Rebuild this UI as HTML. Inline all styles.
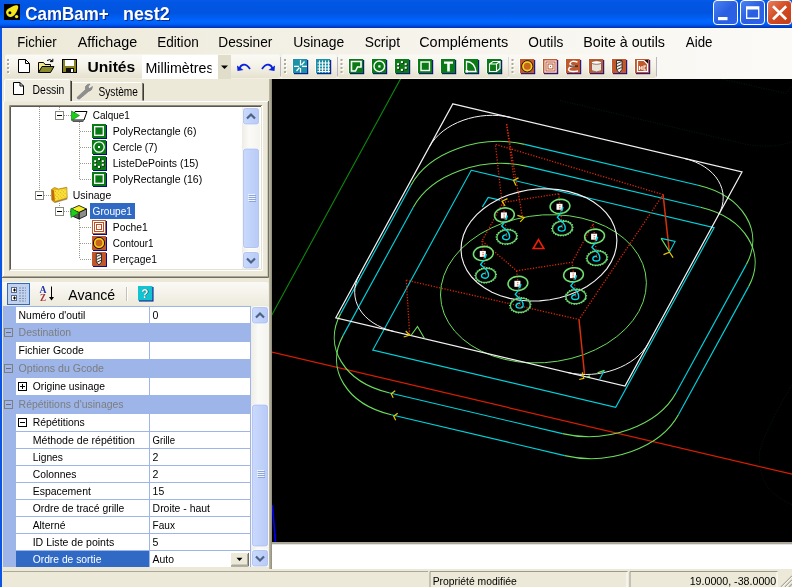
<!DOCTYPE html>
<html><head><meta charset="utf-8"><title>CamBam+ nest2</title>
<style>
html,body{margin:0;padding:0;background:#ECE9D8;overflow:hidden}
svg{display:block;will-change:transform;font-family:"Liberation Sans", sans-serif}
text{white-space:pre}
</style></head><body>
<svg width="792" height="587" viewBox="0 0 792 587">
<defs>
<linearGradient id="gTitle" x1="0" y1="0" x2="0" y2="1">
 <stop offset="0" stop-color="#0459E8"/><stop offset="0.1" stop-color="#0156E3"/>
 <stop offset="0.45" stop-color="#0054E0"/><stop offset="0.6" stop-color="#005CEF"/>
 <stop offset="0.76" stop-color="#0066FE"/><stop offset="0.86" stop-color="#0060F6"/>
 <stop offset="0.93" stop-color="#0046D6"/><stop offset="1" stop-color="#0030B4"/>
</linearGradient>
<linearGradient id="gMenu" x1="0" y1="0" x2="1" y2="0">
 <stop offset="0" stop-color="#ECE9D8"/><stop offset="0.55" stop-color="#F6F4EC"/><stop offset="1" stop-color="#FBFAF7"/>
</linearGradient>
<linearGradient id="gTool" x1="0" y1="0" x2="0" y2="1">
 <stop offset="0" stop-color="#FBFAF6"/><stop offset="0.5" stop-color="#F4F2E8"/><stop offset="1" stop-color="#E6E2CF"/>
</linearGradient>
<linearGradient id="gBtnB" x1="0" y1="0" x2="1" y2="1">
 <stop offset="0" stop-color="#4C84F2"/><stop offset="0.5" stop-color="#2A5FE2"/><stop offset="1" stop-color="#2C62E8"/>
</linearGradient>
<linearGradient id="gBtnR" x1="0" y1="0" x2="1" y2="1">
 <stop offset="0" stop-color="#E8825E"/><stop offset="0.5" stop-color="#D24A22"/><stop offset="1" stop-color="#C43C18"/>
</linearGradient>
<linearGradient id="gSbBtn" x1="0" y1="0" x2="1" y2="0">
 <stop offset="0" stop-color="#CBDAFD"/><stop offset="1" stop-color="#B7CAF6"/>
</linearGradient>
<linearGradient id="gSbTrack" x1="0" y1="0" x2="1" y2="0">
 <stop offset="0" stop-color="#EEEDE5"/><stop offset="0.4" stop-color="#FAFAF7"/><stop offset="1" stop-color="#F4F3EE"/>
</linearGradient>
<linearGradient id="gPgTool" x1="0" y1="0" x2="0" y2="1">
 <stop offset="0" stop-color="#FAF9F5"/><stop offset="1" stop-color="#EDEBDD"/>
</linearGradient>
<clipPath id="clipCombo"><rect x="142" y="55" width="69.5" height="24"/></clipPath>
<clipPath id="clipCanvas"><rect x="272" y="79" width="520" height="463"/></clipPath>
</defs>
<rect x="0" y="0" width="792" height="587" fill="#ECE9D8"/>
<rect x="0" y="0" width="792" height="28" fill="url(#gTitle)"/>
<rect x="4" y="4" width="16" height="16" fill="#000"/>
<path d="M6.2 13.2 C5.6 10.5 8 8.8 10.5 7.6 C12.5 6.4 15.5 4.6 17.6 5.6 C19 6.6 17.8 9.6 16.8 11.6 C15.6 14 13.8 16.6 11 17 C8.8 17.4 6.8 15.8 6.2 13.2 Z" fill="#F4E61E"/>
<circle cx="9.9" cy="12.8" r="1.5" fill="#000"/>
<circle cx="16.6" cy="16.6" r="1.7" fill="#F4E61E"/>
<text x="26.3" y="20.7" font-size="19" fill="#0A2A8A" font-weight="bold" textLength="83.3" lengthAdjust="spacingAndGlyphs">CamBam+</text>
<text x="124.0" y="20.7" font-size="19" fill="#0A2A8A" font-weight="bold" textLength="46.7" lengthAdjust="spacingAndGlyphs">nest2</text>
<text x="25.3" y="19.8" font-size="19" fill="#fff" font-weight="bold" textLength="83.3" lengthAdjust="spacingAndGlyphs">CamBam+</text>
<text x="123.0" y="19.8" font-size="19" fill="#fff" font-weight="bold" textLength="46.7" lengthAdjust="spacingAndGlyphs">nest2</text>
<rect x="713.5" y="0.5" width="24" height="24" rx="3.5" fill="url(#gBtnB)" stroke="#fff" stroke-width="1"/>
<rect x="740.5" y="0.5" width="24" height="24" rx="3.5" fill="url(#gBtnB)" stroke="#fff" stroke-width="1"/>
<rect x="767.5" y="0.5" width="24" height="24" rx="3.5" fill="url(#gBtnR)" stroke="#fff" stroke-width="1"/>
<rect x="718" y="17" width="9.5" height="3.2" fill="#fff"/>
<path d="M746 6.3h13.4v12.6h-13.4z M747.3 9.4v8.2h10.8v-8.2z" fill="#fff" fill-rule="evenodd"/>
<path d="M773 6.2 L786.2 19.2 M786.2 6.2 L773 19.2" stroke="#fff" stroke-width="2.6" stroke-linecap="butt" fill="none"/>
<rect x="2" y="28" width="790" height="26" fill="url(#gMenu)"/>
<text x="17.3" y="46.7" font-size="15" fill="#000" font-weight="normal" textLength="39.4" lengthAdjust="spacingAndGlyphs">Fichier</text>
<text x="77.7" y="46.7" font-size="15" fill="#000" font-weight="normal" textLength="59.6" lengthAdjust="spacingAndGlyphs">Affichage</text>
<text x="157.3" y="46.7" font-size="15" fill="#000" font-weight="normal" textLength="41.4" lengthAdjust="spacingAndGlyphs">Edition</text>
<text x="218.3" y="46.7" font-size="15" fill="#000" font-weight="normal" textLength="54.0" lengthAdjust="spacingAndGlyphs">Dessiner</text>
<text x="293.3" y="46.7" font-size="15" fill="#000" font-weight="normal" textLength="51.0" lengthAdjust="spacingAndGlyphs">Usinage</text>
<text x="364.7" y="46.7" font-size="15" fill="#000" font-weight="normal" textLength="35.3" lengthAdjust="spacingAndGlyphs">Script</text>
<text x="419.2" y="46.7" font-size="15" fill="#000" font-weight="normal" textLength="89.1" lengthAdjust="spacingAndGlyphs">Compléments</text>
<text x="528.3" y="46.7" font-size="15" fill="#000" font-weight="normal" textLength="35.0" lengthAdjust="spacingAndGlyphs">Outils</text>
<text x="583.3" y="46.7" font-size="15" fill="#000" font-weight="normal" textLength="81.7" lengthAdjust="spacingAndGlyphs">Boite à outils</text>
<text x="685.8" y="46.7" font-size="15" fill="#000" font-weight="normal" textLength="26.7" lengthAdjust="spacingAndGlyphs">Aide</text>
<rect x="2" y="54" width="790" height="25" fill="url(#gMenu)"/>
<path d="M7 54.5 H278 Q280 54.5 280 56.5 V76 Q280 78 278 78 H7 Q5 78 5 76 V56.5 Q5 54.5 7 54.5 Z" fill="url(#gTool)"/>
<path d="M280.5 57 V76.5" stroke="#B9B6C3" stroke-width="1" fill="none"/>
<rect x="8" y="60" width="2" height="2" fill="#fff"/>
<rect x="7" y="59" width="2" height="2" fill="#ADAA9A"/>
<rect x="8" y="64" width="2" height="2" fill="#fff"/>
<rect x="7" y="63" width="2" height="2" fill="#ADAA9A"/>
<rect x="8" y="68" width="2" height="2" fill="#fff"/>
<rect x="7" y="67" width="2" height="2" fill="#ADAA9A"/>
<rect x="8" y="72" width="2" height="2" fill="#fff"/>
<rect x="7" y="71" width="2" height="2" fill="#ADAA9A"/>
<path d="M283.5 54.5 H335 Q337 54.5 337 56.5 V76 Q337 78 335 78 H283.5 Q281.5 78 281.5 76 V56.5 Q281.5 54.5 283.5 54.5 Z" fill="url(#gTool)"/>
<path d="M337.5 57 V76.5" stroke="#B9B6C3" stroke-width="1" fill="none"/>
<rect x="285" y="60" width="2" height="2" fill="#fff"/>
<rect x="284" y="59" width="2" height="2" fill="#ADAA9A"/>
<rect x="285" y="64" width="2" height="2" fill="#fff"/>
<rect x="284" y="63" width="2" height="2" fill="#ADAA9A"/>
<rect x="285" y="68" width="2" height="2" fill="#fff"/>
<rect x="284" y="67" width="2" height="2" fill="#ADAA9A"/>
<rect x="285" y="72" width="2" height="2" fill="#fff"/>
<rect x="284" y="71" width="2" height="2" fill="#ADAA9A"/>
<path d="M340 54.5 H506.5 Q508.5 54.5 508.5 56.5 V76 Q508.5 78 506.5 78 H340 Q338 78 338 76 V56.5 Q338 54.5 340 54.5 Z" fill="url(#gTool)"/>
<path d="M509.0 57 V76.5" stroke="#B9B6C3" stroke-width="1" fill="none"/>
<rect x="341.5" y="60" width="2" height="2" fill="#fff"/>
<rect x="340.5" y="59" width="2" height="2" fill="#ADAA9A"/>
<rect x="341.5" y="64" width="2" height="2" fill="#fff"/>
<rect x="340.5" y="63" width="2" height="2" fill="#ADAA9A"/>
<rect x="341.5" y="68" width="2" height="2" fill="#fff"/>
<rect x="340.5" y="67" width="2" height="2" fill="#ADAA9A"/>
<rect x="341.5" y="72" width="2" height="2" fill="#fff"/>
<rect x="340.5" y="71" width="2" height="2" fill="#ADAA9A"/>
<path d="M511 54.5 H654 Q656 54.5 656 56.5 V76 Q656 78 654 78 H511 Q509 78 509 76 V56.5 Q509 54.5 511 54.5 Z" fill="url(#gTool)"/>
<path d="M656.5 57 V76.5" stroke="#B9B6C3" stroke-width="1" fill="none"/>
<rect x="512.5" y="60" width="2" height="2" fill="#fff"/>
<rect x="511.5" y="59" width="2" height="2" fill="#ADAA9A"/>
<rect x="512.5" y="64" width="2" height="2" fill="#fff"/>
<rect x="511.5" y="63" width="2" height="2" fill="#ADAA9A"/>
<rect x="512.5" y="68" width="2" height="2" fill="#fff"/>
<rect x="511.5" y="67" width="2" height="2" fill="#ADAA9A"/>
<rect x="512.5" y="72" width="2" height="2" fill="#fff"/>
<rect x="511.5" y="71" width="2" height="2" fill="#ADAA9A"/>
<path d="M18.5 59.5 H25.5 L29.5 63.5 V72.5 H18.5 Z" fill="#fff" stroke="#000" stroke-width="1"/>
<path d="M25.5 59.5 V63.5 H29.5" fill="none" stroke="#000" stroke-width="1"/>
<path d="M38.5 72.5 V62.5 H43.5 L45 64.5 H50.5 V66.5" fill="#F3E98A" stroke="#000" stroke-width="1"/>
<path d="M38.5 72.5 L42 66.5 H54 L50.5 72.5 Z" fill="#8A8A2A" stroke="#000" stroke-width="1"/>
<path d="M47 60.5 Q50 58.5 52.5 61 M52.8 58.8 V61.6 H50" fill="none" stroke="#000" stroke-width="1"/>
<rect x="62.5" y="59.5" width="14" height="13" fill="#8A8220" stroke="#000" stroke-width="1"/>
<rect x="65" y="60" width="9" height="6" fill="#fff"/>
<rect x="66" y="68" width="8" height="5" fill="#111"/>
<rect x="71" y="69" width="2" height="3" fill="#fff"/>
<text x="87.5" y="71.6" font-size="15" fill="#000" font-weight="bold" textLength="47.7" lengthAdjust="spacingAndGlyphs">Unités</text>
<rect x="142" y="55" width="76" height="24" fill="#fff"/>
<text x="145.5" y="72.5" font-size="15" fill="#000" font-weight="normal" textLength="68.0" lengthAdjust="spacingAndGlyphs" clip-path="url(#clipCombo)">Millimètres</text>
<rect x="218" y="55" width="13" height="24" fill="#E0DDCB"/>
<path d="M221 65.5 h7 l-3.5 3.6 z" fill="#000"/>
<path d="M239.5 69.5 C240 64.5 245.5 62 250 69" fill="none" stroke="#0A22E0" stroke-width="1.8"/>
<path d="M237 65.5 L237.5 71 L243.5 70 Z" fill="#0A22E0"/>
<path d="M262 69 C266.5 62 272 64.5 272.5 69.5" fill="none" stroke="#0A22E0" stroke-width="1.8"/>
<path d="M275 65.5 L274.5 71 L268.5 70 Z" fill="#0A22E0"/>
<g transform="translate(0,-0.5)">
<rect x="292" y="58.5" width="15" height="15" fill="#FFFFFF"/>
<rect x="294" y="60.5" width="14.2" height="14.2" fill="#0A0A8C"/>
<rect x="293" y="59.5" width="14.2" height="14.2" fill="#1C92A8"/>
<path d="M300.5 60.5 V66 M300.5 68.5 V73 M294 66.8 H299 M302 66.8 H307 M304.5 62 L301.5 65.5 M296.5 71.5 L299.5 68" stroke="#fff" stroke-width="1.2" fill="none"/>
<rect x="315" y="58.5" width="15" height="15" fill="#FFFFFF"/>
<rect x="317" y="60.5" width="14.2" height="14.2" fill="#0A0A8C"/>
<rect x="316" y="59.5" width="14.2" height="14.2" fill="#1C92A8"/>
<path d="M319.5 61 V73 M322.5 61 V73 M325.5 61 V73 M328.5 61 V73 M317.5 63.5 H330 M317.5 66.5 H330 M317.5 69.5 H330 M317.5 72 H330" stroke="#fff" stroke-width="1" fill="none"/>
<rect x="348" y="58.5" width="15" height="15" fill="#FFFFFF"/>
<rect x="350" y="60.5" width="14.2" height="14.2" fill="#0A0A8C"/>
<rect x="349" y="59.5" width="14.2" height="14.2" fill="#0A7A14"/>
<path d="M351.5 62 H361 V67.5 H357.5 L355.5 71.5 H351.5 Z" fill="none" stroke="#fff" stroke-width="1.6"/>
<rect x="371" y="58.5" width="15" height="15" fill="#FFFFFF"/>
<rect x="373" y="60.5" width="14.2" height="14.2" fill="#0A0A8C"/>
<rect x="372" y="59.5" width="14.2" height="14.2" fill="#0A7A14"/>
<ellipse cx="379.3" cy="66.8" rx="5.3" ry="5.3" fill="none" stroke="#fff" stroke-width="1.4"/><rect x="378.3" y="65.8" width="2.2" height="2.2" fill="#fff"/>
<rect x="394" y="58.5" width="15" height="15" fill="#FFFFFF"/>
<rect x="396" y="60.5" width="14.2" height="14.2" fill="#0A0A8C"/>
<rect x="395" y="59.5" width="14.2" height="14.2" fill="#0A7A14"/>
<rect x="401.4" y="62.1" width="2.2" height="2.2" fill="#111"/>
<rect x="400.9" y="61.6" width="2" height="2" fill="#fff"/>
<rect x="397.59999999999997" y="64.2" width="2.2" height="2.2" fill="#111"/>
<rect x="397.09999999999997" y="63.7" width="2" height="2" fill="#fff"/>
<rect x="405.2" y="64.2" width="2.2" height="2.2" fill="#111"/>
<rect x="404.7" y="63.7" width="2" height="2" fill="#fff"/>
<rect x="397.59999999999997" y="67.8" width="2.2" height="2.2" fill="#111"/>
<rect x="397.09999999999997" y="67.3" width="2" height="2" fill="#fff"/>
<rect x="405.2" y="67.8" width="2.2" height="2.2" fill="#111"/>
<rect x="404.7" y="67.3" width="2" height="2" fill="#fff"/>
<rect x="401.4" y="69.9" width="2.2" height="2.2" fill="#111"/>
<rect x="400.9" y="69.4" width="2" height="2" fill="#fff"/>
<rect x="417" y="58.5" width="15" height="15" fill="#FFFFFF"/>
<rect x="419" y="60.5" width="14.2" height="14.2" fill="#0A0A8C"/>
<rect x="418" y="59.5" width="14.2" height="14.2" fill="#0A7A14"/>
<rect x="421" y="62.5" width="8.5" height="8.5" fill="none" stroke="#fff" stroke-width="1.4"/>
<rect x="440" y="58.5" width="15" height="15" fill="#FFFFFF"/>
<rect x="442" y="60.5" width="14.2" height="14.2" fill="#0A0A8C"/>
<rect x="441" y="59.5" width="14.2" height="14.2" fill="#0A7A14"/>
<path d="M444 62 H453 V64.2 H449.8 V72 H447.2 V64.2 H444 Z" fill="#fff"/>
<rect x="463" y="58.5" width="15" height="15" fill="#FFFFFF"/>
<rect x="465" y="60.5" width="14.2" height="14.2" fill="#0A0A8C"/>
<rect x="464" y="59.5" width="14.2" height="14.2" fill="#0A7A14"/>
<path d="M466.5 72 V62 Q474.5 62.5 476 72 Z" fill="none" stroke="#fff" stroke-width="1.3"/><rect x="465.5" y="70.5" width="2.5" height="2.5" fill="#fff"/>
<rect x="486" y="58.5" width="15" height="15" fill="#FFFFFF"/>
<rect x="488" y="60.5" width="14.2" height="14.2" fill="#0A0A8C"/>
<rect x="487" y="59.5" width="14.2" height="14.2" fill="#0A7A14"/>
<path d="M489.5 64.5 L493 62 H500 V69 L496.5 72 H489.5 Z M489.5 64.5 H496.5 V72 M496.5 64.5 L500 62" fill="none" stroke="#fff" stroke-width="1.1"/>
<rect x="519" y="58.5" width="15" height="15" fill="#FFFFFF"/>
<rect x="521" y="60.5" width="14.2" height="14.2" fill="#0A0A8C"/>
<rect x="520" y="59.5" width="14.2" height="14.2" fill="#C0582C"/>
<circle cx="527.3" cy="66.8" r="5.6" fill="#C8641E" stroke="#111" stroke-width="1"/><circle cx="527.3" cy="66.8" r="4.3" fill="none" stroke="#F2D41A" stroke-width="1.6"/>
<rect x="542" y="58.5" width="15" height="15" fill="#FFFFFF"/>
<rect x="544" y="60.5" width="14.2" height="14.2" fill="#0A0A8C"/>
<rect x="543" y="59.5" width="14.2" height="14.2" fill="#C0582C"/>
<rect x="544.5" y="61" width="12" height="12" fill="#fff"/>
<rect x="546" y="62.5" width="9" height="9" fill="none" stroke="#B8502A" stroke-width="1"/><rect x="548" y="64.5" width="5" height="5" fill="none" stroke="#B8502A" stroke-width="1"/><rect x="550" y="66.5" width="1" height="1" fill="#B8502A"/>
<rect x="565" y="58.5" width="15" height="15" fill="#FFFFFF"/>
<rect x="567" y="60.5" width="14.2" height="14.2" fill="#0A0A8C"/>
<rect x="566" y="59.5" width="14.2" height="14.2" fill="#C0582C"/>
<path d="M577.5 62.5 Q571 60.5 570 64 Q570 66.5 575 66.5 Q569 67 568.5 70 Q569.5 73 578 71.5" fill="none" stroke="#fff" stroke-width="1.5"/><path d="M570 66.6 H578" stroke="#111" stroke-width="1"/>
<rect x="588" y="58.5" width="15" height="15" fill="#FFFFFF"/>
<rect x="590" y="60.5" width="14.2" height="14.2" fill="#0A0A8C"/>
<rect x="589" y="59.5" width="14.2" height="14.2" fill="#C0582C"/>
<path d="M591.5 63 V71 Q596.5 74 601.5 71 V63 Z" fill="#E8E4DC" stroke="#8A4A30" stroke-width="0.8"/><ellipse cx="596.5" cy="63" rx="5" ry="1.8" fill="#fff" stroke="#8A4A30" stroke-width="0.8"/>
<rect x="611" y="58.5" width="15" height="15" fill="#FFFFFF"/>
<rect x="613" y="60.5" width="14.2" height="14.2" fill="#0A0A8C"/>
<rect x="612" y="59.5" width="14.2" height="14.2" fill="#C0582C"/>
<path d="M616.5 61 H622 V70 L619.2 73.5 L616.5 70 Z" fill="#F4EEE6" stroke="#222" stroke-width="0.9"/><path d="M617 64 L621.5 62 M617 67 L621.5 65 M617 70 L621.5 68" stroke="#222" stroke-width="0.9"/>
<rect x="634" y="58.5" width="15" height="15" fill="#FFFFFF"/>
<rect x="636" y="60.5" width="14.2" height="14.2" fill="#0A0A8C"/>
<rect x="635" y="59.5" width="14.2" height="14.2" fill="#C0582C"/>
<path d="M637.5 61 H644 L647.5 64.5 V72 H637.5 Z" fill="none" stroke="#fff" stroke-width="1.2"/><path d="M644.5 60.5 L648 64 V60.5 Z" fill="#111"/>
<path d="M639.5 66.5 V70.5 M642 66.5 V70.5 M639.5 68.5 H642 M646 66.5 H644 V70.5 H646" fill="none" stroke="#fff" stroke-width="1.1"/>
</g>
<rect x="0" y="28" width="2" height="559" fill="#0A55E4"/>
<rect x="3" y="79" width="266" height="23" fill="#ECE9D8"/>
<path d="M4.5 101.5 V81.5 Q4.5 79.5 6.5 79.5 H69.5 Q71.5 79.5 71.5 81.5 V101.5" fill="#F1EFE4" stroke="none"/>
<path d="M4.5 101.5 V81.5 Q4.5 79.5 6.5 79.5 H69.5" fill="none" stroke="#fff" stroke-width="1"/>
<path d="M70.5 80.5 V101" stroke="#807D6F" stroke-width="1"/><path d="M71.5 81 V101" stroke="#3C3B35" stroke-width="1"/>
<path d="M72.5 82.5 H141" stroke="#fff" stroke-width="1"/>
<path d="M142.5 83 V100.5" stroke="#807D6F" stroke-width="1"/><path d="M143.5 83.5 V100.5" stroke="#3C3B35" stroke-width="1"/>
<path d="M72 101.5 H268" stroke="#fff" stroke-width="1"/>
<path d="M3.5 101.5 V276" stroke="#fff" stroke-width="1"/>
<path d="M13.5 82.5 H20 L23.5 86 V94.5 H13.5 Z" fill="#fff" stroke="#000" stroke-width="1"/><path d="M20 82.5 V86 H23.5" fill="none" stroke="#000" stroke-width="1"/>
<text x="32.6" y="94.0" font-size="12" fill="#000" font-weight="normal" textLength="31.8" lengthAdjust="spacingAndGlyphs">Dessin</text>
<path d="M77 97.5 L85.5 89.5 Q84.5 86 87.5 84.5 L90 84 L88 87 L89.5 88.5 L92.5 86.5 Q92.5 90.5 88.5 91.5 L79.5 99 Q77.5 99.5 77 97.5 Z" fill="#8E8E8E" stroke="#7A7A7A" stroke-width="0.6"/>
<text x="98.5" y="95.5" font-size="12" fill="#000" font-weight="normal" textLength="39.4" lengthAdjust="spacingAndGlyphs">Système</text>
<rect x="9" y="105" width="253" height="166" fill="#fff"/>
<path d="M9.5 270.5 V105.5 H262" fill="none" stroke="#8C897C" stroke-width="1"/>
<path d="M10.5 269.5 V106.5 H261" fill="none" stroke="#5B594F" stroke-width="1"/>
<path d="M10 270.5 H262.5 V106" fill="none" stroke="#fff" stroke-width="1"/>
<path d="M11 269.5 H261.5 V107" fill="none" stroke="#E4E1D2" stroke-width="1"/>
<line x1="39.5" y1="107" x2="39.5" y2="195" stroke="#9A9A8E" stroke-width="1" stroke-dasharray="1 1"/>
<line x1="59.5" y1="107" x2="59.5" y2="111" stroke="#9A9A8E" stroke-width="1" stroke-dasharray="1 1"/>
<line x1="64" y1="115.5" x2="71" y2="115.5" stroke="#9A9A8E" stroke-width="1" stroke-dasharray="1 1"/>
<line x1="79.5" y1="122" x2="79.5" y2="179" stroke="#9A9A8E" stroke-width="1" stroke-dasharray="1 1"/>
<line x1="80" y1="131.5" x2="91" y2="131.5" stroke="#9A9A8E" stroke-width="1" stroke-dasharray="1 1"/>
<line x1="80" y1="147.5" x2="91" y2="147.5" stroke="#9A9A8E" stroke-width="1" stroke-dasharray="1 1"/>
<line x1="80" y1="163.5" x2="91" y2="163.5" stroke="#9A9A8E" stroke-width="1" stroke-dasharray="1 1"/>
<line x1="80" y1="179.5" x2="91" y2="179.5" stroke="#9A9A8E" stroke-width="1" stroke-dasharray="1 1"/>
<line x1="44" y1="195.5" x2="51" y2="195.5" stroke="#9A9A8E" stroke-width="1" stroke-dasharray="1 1"/>
<line x1="59.5" y1="203" x2="59.5" y2="207" stroke="#9A9A8E" stroke-width="1" stroke-dasharray="1 1"/>
<line x1="64" y1="211.5" x2="71" y2="211.5" stroke="#9A9A8E" stroke-width="1" stroke-dasharray="1 1"/>
<line x1="79.5" y1="219" x2="79.5" y2="259" stroke="#9A9A8E" stroke-width="1" stroke-dasharray="1 1"/>
<line x1="80" y1="227.5" x2="91" y2="227.5" stroke="#9A9A8E" stroke-width="1" stroke-dasharray="1 1"/>
<line x1="80" y1="243.5" x2="91" y2="243.5" stroke="#9A9A8E" stroke-width="1" stroke-dasharray="1 1"/>
<line x1="80" y1="259.5" x2="91" y2="259.5" stroke="#9A9A8E" stroke-width="1" stroke-dasharray="1 1"/>
<rect x="55.5" y="111.5" width="8" height="8" fill="#fff" stroke="#8A887C" stroke-width="1"/>
<rect x="57" y="115" width="5" height="1" fill="#000"/>
<rect x="35.5" y="191.5" width="8" height="8" fill="#fff" stroke="#8A887C" stroke-width="1"/>
<rect x="37" y="195" width="5" height="1" fill="#000"/>
<rect x="55.5" y="207.5" width="8" height="8" fill="#fff" stroke="#8A887C" stroke-width="1"/>
<rect x="57" y="211" width="5" height="1" fill="#000"/>
<path d="M75 111.5 H87 L84 120 H72 Z" fill="#fff" stroke="#000" stroke-width="1"/>
<path d="M72 120.5 H84 L83 122 H73 Z" fill="#555"/>
<path d="M71.5 111 L79.5 115.5 L71.5 120.5 Z" fill="#18D018" stroke="#0A700A" stroke-width="0.6"/>
<path d="M51.5 189.5 L54.5 187.5 L58.5 189 L66.8 187.3 L67.2 198.2 L54.2 202.2 L51.8 200.2 Z" fill="#E8B418" stroke="#A87808" stroke-width="0.7"/>
<path d="M54 190.6 L66.4 188.6 L66.5 197.6 L54.8 200.8 Z" fill="#F6E23A" stroke="none"/>
<path d="M51.6 189.6 L54 190.6 L54.8 201.2 L52 200 Z" fill="#C26A08"/>
<path d="M54.2 202 L67.2 198.2 L67.4 199.4 L55 203 Z" fill="#7A5A20" opacity="0.6"/>
<rect x="55.0" y="191.0" width="0.9" height="0.9" fill="#E89A10"/>
<rect x="55.0" y="194.6" width="0.9" height="0.9" fill="#E89A10"/>
<rect x="55.0" y="198.2" width="0.9" height="0.9" fill="#E89A10"/>
<rect x="56.6" y="192.52" width="0.9" height="0.9" fill="#E89A10"/>
<rect x="56.6" y="196.12" width="0.9" height="0.9" fill="#E89A10"/>
<rect x="58.2" y="190.44" width="0.9" height="0.9" fill="#E89A10"/>
<rect x="58.2" y="194.04" width="0.9" height="0.9" fill="#E89A10"/>
<rect x="58.2" y="197.64" width="0.9" height="0.9" fill="#E89A10"/>
<rect x="59.8" y="191.96" width="0.9" height="0.9" fill="#E89A10"/>
<rect x="59.8" y="195.56" width="0.9" height="0.9" fill="#E89A10"/>
<rect x="61.4" y="189.88" width="0.9" height="0.9" fill="#E89A10"/>
<rect x="61.4" y="193.48" width="0.9" height="0.9" fill="#E89A10"/>
<rect x="61.4" y="197.07999999999998" width="0.9" height="0.9" fill="#E89A10"/>
<rect x="63.0" y="191.4" width="0.9" height="0.9" fill="#E89A10"/>
<rect x="63.0" y="195.0" width="0.9" height="0.9" fill="#E89A10"/>
<rect x="64.6" y="189.32" width="0.9" height="0.9" fill="#E89A10"/>
<rect x="64.6" y="192.92" width="0.9" height="0.9" fill="#E89A10"/>
<rect x="64.6" y="196.51999999999998" width="0.9" height="0.9" fill="#E89A10"/>
<path d="M71 209 L79 205.5 L86.5 209 L79 212.5 Z" fill="#F4EC28" stroke="#000" stroke-width="0.8"/>
<path d="M79 212.5 L86.5 209 V215.5 L79 219 Z" fill="#8C8C8C" stroke="#000" stroke-width="0.8"/>
<path d="M71 209 L79 212.5 V219 L71 215.5 Z" fill="#5A5A5A" stroke="#000" stroke-width="0.8"/>
<path d="M71 208 L79 213 L71 217.5 Z" fill="#18D018" stroke="#0A700A" stroke-width="0.6"/>
<rect x="93" y="125" width="14" height="14" fill="#0A0A8C"/>
<rect x="92" y="124" width="14" height="14" fill="#0A7A14"/>
<rect x="94.7" y="126.7" width="8.6" height="8.6" fill="none" stroke="#fff" stroke-width="1.3"/>
<rect x="93" y="141" width="14" height="14" fill="#0A0A8C"/>
<rect x="92" y="140" width="14" height="14" fill="#0A7A14"/>
<ellipse cx="99" cy="147" rx="5.2" ry="5.2" fill="none" stroke="#fff" stroke-width="1.3"/><rect x="98" y="146" width="2" height="2" fill="#fff"/>
<rect x="93" y="157" width="14" height="14" fill="#0A0A8C"/>
<rect x="92" y="156" width="14" height="14" fill="#0A7A14"/>
<rect x="98.5" y="158.6" width="2.2" height="2.2" fill="#111"/>
<rect x="98" y="158.1" width="2" height="2" fill="#fff"/>
<rect x="94.7" y="160.7" width="2.2" height="2.2" fill="#111"/>
<rect x="94.2" y="160.2" width="2" height="2" fill="#fff"/>
<rect x="102.3" y="160.7" width="2.2" height="2.2" fill="#111"/>
<rect x="101.8" y="160.2" width="2" height="2" fill="#fff"/>
<rect x="94.7" y="164.3" width="2.2" height="2.2" fill="#111"/>
<rect x="94.2" y="163.8" width="2" height="2" fill="#fff"/>
<rect x="102.3" y="164.3" width="2.2" height="2.2" fill="#111"/>
<rect x="101.8" y="163.8" width="2" height="2" fill="#fff"/>
<rect x="98.5" y="166.4" width="2.2" height="2.2" fill="#111"/>
<rect x="98" y="165.9" width="2" height="2" fill="#fff"/>
<rect x="93" y="173" width="14" height="14" fill="#0A0A8C"/>
<rect x="92" y="172" width="14" height="14" fill="#0A7A14"/>
<rect x="94.7" y="174.7" width="8.6" height="8.6" fill="none" stroke="#fff" stroke-width="1.3"/>
<rect x="93" y="221" width="14" height="14" fill="#0A0A8C"/>
<rect x="92" y="220" width="14" height="14" fill="#C0582C"/>
<rect x="93" y="221" width="12" height="12" fill="#fff"/>
<rect x="94.5" y="222.5" width="9" height="9" fill="none" stroke="#B8502A" stroke-width="1"/><rect x="96.5" y="224.5" width="5" height="5" fill="none" stroke="#B8502A" stroke-width="1"/><rect x="98.5" y="226.5" width="1" height="1" fill="#B8502A"/>
<rect x="93" y="237" width="14" height="14" fill="#0A0A8C"/>
<rect x="92" y="236" width="14" height="14" fill="#C0582C"/>
<circle cx="99" cy="243" r="5.6" fill="#C8641E" stroke="#111" stroke-width="1"/><circle cx="99" cy="243" r="4.2" fill="none" stroke="#F2D41A" stroke-width="1.5"/>
<rect x="93" y="253" width="14" height="14" fill="#0A0A8C"/>
<rect x="92" y="252" width="14" height="14" fill="#C0582C"/>
<path d="M96.3 253.5 H101.5 V262 L99 265 L96.3 262 Z" fill="#F4EEE6" stroke="#222" stroke-width="0.9"/><path d="M96.8 256.5 L101 254.5 M96.8 259.5 L101 257.5 M96.8 262.3 L101 260.3" stroke="#222" stroke-width="0.9"/>
<text x="92.7" y="118.8" font-size="11" fill="#000" font-weight="normal" textLength="37.1" lengthAdjust="spacingAndGlyphs">Calque1</text>
<text x="112.7" y="134.8" font-size="11" fill="#000" font-weight="normal" textLength="83.8" lengthAdjust="spacingAndGlyphs">PolyRectangle (6)</text>
<text x="112.7" y="150.8" font-size="11" fill="#000" font-weight="normal" textLength="44.6" lengthAdjust="spacingAndGlyphs">Cercle (7)</text>
<text x="112.7" y="166.7" font-size="11" fill="#000" font-weight="normal" textLength="85.8" lengthAdjust="spacingAndGlyphs">ListeDePoints (15)</text>
<text x="112.7" y="182.6" font-size="11" fill="#000" font-weight="normal" textLength="89.5" lengthAdjust="spacingAndGlyphs">PolyRectangle (16)</text>
<text x="72.8" y="198.8" font-size="11" fill="#000" font-weight="normal" textLength="38.4" lengthAdjust="spacingAndGlyphs">Usinage</text>
<rect x="90" y="203" width="45" height="16" fill="#316AC5"/>
<text x="92.6" y="214.8" font-size="11" fill="#fff" font-weight="normal" textLength="39.4" lengthAdjust="spacingAndGlyphs">Groupe1</text>
<text x="112.8" y="230.9" font-size="11" fill="#000" font-weight="normal" textLength="35.0" lengthAdjust="spacingAndGlyphs">Poche1</text>
<text x="112.8" y="246.7" font-size="11" fill="#000" font-weight="normal" textLength="40.8" lengthAdjust="spacingAndGlyphs">Contour1</text>
<text x="112.8" y="262.6" font-size="11" fill="#000" font-weight="normal" textLength="44.1" lengthAdjust="spacingAndGlyphs">Perçage1</text>
<rect x="242" y="107.5" width="18" height="161.5" fill="url(#gSbTrack)"/>
<rect x="243" y="108.0" width="16" height="16.5" rx="2" fill="url(#gSbBtn)" stroke="#fff" stroke-width="1"/>
<rect x="243.5" y="108.5" width="15" height="15.5" rx="2" fill="none" stroke="#A9BDEE" stroke-width="0.8"/>
<path d="M247 118.5 L251 114.5 L255 118.5" fill="none" stroke="#4D6185" stroke-width="2.2"/>
<rect x="243" y="252.0" width="16" height="16.5" rx="2" fill="url(#gSbBtn)" stroke="#fff" stroke-width="1"/>
<rect x="243.5" y="252.5" width="15" height="15.5" rx="2" fill="none" stroke="#A9BDEE" stroke-width="0.8"/>
<path d="M247 258.5 L251 262.5 L255 258.5" fill="none" stroke="#4D6185" stroke-width="2.2"/>
<rect x="243" y="148.5" width="16" height="99.5" rx="2" fill="url(#gSbBtn)" stroke="#fff" stroke-width="1"/>
<rect x="243.5" y="149" width="15" height="98.5" rx="2" fill="none" stroke="#A9BDEE" stroke-width="0.8"/>
<rect x="248" y="194" width="7" height="1" fill="#EEF4FE"/>
<rect x="249" y="195" width="7" height="1" fill="#8CA4D8"/>
<rect x="248" y="196" width="7" height="1" fill="#EEF4FE"/>
<rect x="249" y="197" width="7" height="1" fill="#8CA4D8"/>
<rect x="248" y="198" width="7" height="1" fill="#EEF4FE"/>
<rect x="249" y="199" width="7" height="1" fill="#8CA4D8"/>
<rect x="248" y="200" width="7" height="1" fill="#EEF4FE"/>
<rect x="249" y="201" width="7" height="1" fill="#8CA4D8"/>
<path d="M3 276.5 H268 V102" fill="none" stroke="#ACA899" stroke-width="1"/>
<path d="M2 277.5 H268.5 V101" fill="none" stroke="#716F64" stroke-width="1"/>
<rect x="2" y="278" width="267" height="28" fill="#ECE9D8"/>
<path d="M2 282 H266 Q268.5 282 268.5 284.5 V303 Q268.5 305.5 266 305.5 H2 Z" fill="url(#gPgTool)"/>
<rect x="7.5" y="283.5" width="22" height="21" fill="#C1D2EE" stroke="#316AC5" stroke-width="1"/>
<rect x="11.5" y="287.5" width="5" height="5" fill="#fff" stroke="#5A6A8E" stroke-width="1"/>
<rect x="13" y="289.5" width="3" height="1" fill="#000"/>
<rect x="14" y="288.5" width="1" height="3" fill="#000"/>
<path d="M19 288.0 H26" stroke="#7F8FB0" stroke-width="1" stroke-dasharray="2 1"/>
<path d="M19 290.5 H26" stroke="#7F8FB0" stroke-width="1" stroke-dasharray="2 1"/>
<path d="M19 293.0 H26" stroke="#7F8FB0" stroke-width="1" stroke-dasharray="2 1"/>
<rect x="11.5" y="295.5" width="5" height="5" fill="#fff" stroke="#5A6A8E" stroke-width="1"/>
<rect x="13" y="297.5" width="3" height="1" fill="#000"/>
<rect x="14" y="296.5" width="1" height="3" fill="#000"/>
<path d="M19 296.0 H26" stroke="#7F8FB0" stroke-width="1" stroke-dasharray="2 1"/>
<path d="M19 298.5 H26" stroke="#7F8FB0" stroke-width="1" stroke-dasharray="2 1"/>
<path d="M19 301.0 H26" stroke="#7F8FB0" stroke-width="1" stroke-dasharray="2 1"/>
<text x="39.5" y="293.0" font-size="9.5" fill="#2038A8" font-weight="bold" textLength="7.0" lengthAdjust="spacingAndGlyphs" font-family="'Liberation Serif', serif">A</text>
<text x="40.0" y="301.3" font-size="9.5" fill="#A83030" font-weight="bold" textLength="6.0" lengthAdjust="spacingAndGlyphs" font-family="'Liberation Serif', serif">Z</text>
<path d="M51.5 286.5 V299" stroke="#000" stroke-width="1"/><path d="M49 297 L51.5 300.5 L54 297 Z" fill="#000"/>
<text x="68.3" y="299.9" font-size="15" fill="#000" font-weight="normal" textLength="46.9" lengthAdjust="spacingAndGlyphs">Avancé</text>
<line x1="126.5" y1="287" x2="126.5" y2="301" stroke="#C5C2B2" stroke-width="1"/>
<line x1="127.5" y1="287" x2="127.5" y2="301" stroke="#fff" stroke-width="1"/>
<rect x="139" y="287" width="14.5" height="14.5" fill="#0A0A8C"/>
<rect x="138" y="286" width="14.5" height="14.5" fill="#12C4D2"/>
<text x="142.0" y="298.0" font-size="12" fill="#000" font-weight="bold" textLength="7.0" lengthAdjust="spacingAndGlyphs">?</text>
<text x="141.5" y="297.5" font-size="12" fill="#fff" font-weight="bold" textLength="7.0" lengthAdjust="spacingAndGlyphs">?</text>
<rect x="3" y="306" width="248" height="261" fill="#9DB5E8"/>
<rect x="16" y="307" width="133" height="16" fill="#fff"/>
<rect x="150" y="307" width="100" height="16" fill="#fff"/>
<text x="18.6" y="318.8" font-size="11" fill="#000" font-weight="normal" textLength="66.7" lengthAdjust="spacingAndGlyphs">Numéro d'outil</text>
<text x="152.6" y="318.8" font-size="11" fill="#000" font-weight="normal" textLength="5.9" lengthAdjust="spacingAndGlyphs">0</text>
<rect x="4.5" y="328.5" width="8" height="8" fill="#9DB5E8" stroke="#7F7F7F" stroke-width="1"/>
<rect x="6" y="332" width="5" height="1" fill="#6E6E6E"/>
<text x="18.6" y="335.8" font-size="11" fill="#7D7D7D" font-weight="normal" textLength="52.5" lengthAdjust="spacingAndGlyphs">Destination</text>
<rect x="16" y="342" width="133" height="17" fill="#fff"/>
<rect x="150" y="342" width="100" height="17" fill="#fff"/>
<text x="18.6" y="353.8" font-size="11" fill="#000" font-weight="normal" textLength="65.2" lengthAdjust="spacingAndGlyphs">Fichier Gcode</text>
<rect x="4.5" y="364.5" width="8" height="8" fill="#9DB5E8" stroke="#7F7F7F" stroke-width="1"/>
<rect x="6" y="368" width="5" height="1" fill="#6E6E6E"/>
<text x="18.6" y="371.8" font-size="11" fill="#7D7D7D" font-weight="normal" textLength="85.4" lengthAdjust="spacingAndGlyphs">Options du Gcode</text>
<rect x="16" y="378" width="133" height="17" fill="#fff"/>
<rect x="150" y="378" width="100" height="17" fill="#fff"/>
<rect x="18.5" y="382.5" width="8" height="8" fill="#fff" stroke="#000" stroke-width="1"/>
<rect x="20" y="386" width="5" height="1" fill="#000"/>
<rect x="22" y="384" width="1" height="5" fill="#000"/>
<text x="32.7" y="389.8" font-size="11" fill="#000" font-weight="normal" textLength="72.3" lengthAdjust="spacingAndGlyphs">Origine usinage</text>
<rect x="4.5" y="400.5" width="8" height="8" fill="#9DB5E8" stroke="#7F7F7F" stroke-width="1"/>
<rect x="6" y="404" width="5" height="1" fill="#6E6E6E"/>
<text x="18.6" y="407.8" font-size="11" fill="#7D7D7D" font-weight="normal" textLength="105.0" lengthAdjust="spacingAndGlyphs">Répétitions d'usinages</text>
<rect x="16" y="414" width="133" height="17" fill="#fff"/>
<rect x="150" y="414" width="100" height="17" fill="#fff"/>
<rect x="18.5" y="418.5" width="8" height="8" fill="#fff" stroke="#000" stroke-width="1"/>
<rect x="20" y="422" width="5" height="1" fill="#000"/>
<text x="32.7" y="425.8" font-size="11" fill="#000" font-weight="normal" textLength="52.1" lengthAdjust="spacingAndGlyphs">Répétitions</text>
<rect x="16" y="432" width="133" height="16" fill="#fff"/>
<rect x="150" y="432" width="100" height="16" fill="#fff"/>
<text x="32.7" y="443.8" font-size="11" fill="#000" font-weight="normal" textLength="102.3" lengthAdjust="spacingAndGlyphs">Méthode de répétition</text>
<text x="152.6" y="443.8" font-size="11" fill="#000" font-weight="normal" textLength="22.4" lengthAdjust="spacingAndGlyphs">Grille</text>
<rect x="16" y="449" width="133" height="16" fill="#fff"/>
<rect x="150" y="449" width="100" height="16" fill="#fff"/>
<text x="32.7" y="460.8" font-size="11" fill="#000" font-weight="normal" textLength="30.3" lengthAdjust="spacingAndGlyphs">Lignes</text>
<text x="152.6" y="460.8" font-size="11" fill="#000" font-weight="normal" textLength="5.9" lengthAdjust="spacingAndGlyphs">2</text>
<rect x="16" y="466" width="133" height="16" fill="#fff"/>
<rect x="150" y="466" width="100" height="16" fill="#fff"/>
<text x="32.7" y="477.8" font-size="11" fill="#000" font-weight="normal" textLength="43.7" lengthAdjust="spacingAndGlyphs">Colonnes</text>
<text x="152.6" y="477.8" font-size="11" fill="#000" font-weight="normal" textLength="5.9" lengthAdjust="spacingAndGlyphs">2</text>
<rect x="16" y="483" width="133" height="16" fill="#fff"/>
<rect x="150" y="483" width="100" height="16" fill="#fff"/>
<text x="32.7" y="494.8" font-size="11" fill="#000" font-weight="normal" textLength="58.2" lengthAdjust="spacingAndGlyphs">Espacement</text>
<text x="152.6" y="494.8" font-size="11" fill="#000" font-weight="normal" textLength="11.6" lengthAdjust="spacingAndGlyphs">15</text>
<rect x="16" y="500" width="133" height="16" fill="#fff"/>
<rect x="150" y="500" width="100" height="16" fill="#fff"/>
<text x="32.7" y="511.8" font-size="11" fill="#000" font-weight="normal" textLength="91.7" lengthAdjust="spacingAndGlyphs">Ordre de tracé grille</text>
<text x="152.6" y="511.8" font-size="11" fill="#000" font-weight="normal" textLength="57.4" lengthAdjust="spacingAndGlyphs">Droite - haut</text>
<rect x="16" y="517" width="133" height="16" fill="#fff"/>
<rect x="150" y="517" width="100" height="16" fill="#fff"/>
<text x="32.7" y="528.8" font-size="11" fill="#000" font-weight="normal" textLength="32.7" lengthAdjust="spacingAndGlyphs">Alterné</text>
<text x="152.6" y="528.8" font-size="11" fill="#000" font-weight="normal" textLength="22.4" lengthAdjust="spacingAndGlyphs">Faux</text>
<rect x="16" y="534" width="133" height="16" fill="#fff"/>
<rect x="150" y="534" width="100" height="16" fill="#fff"/>
<text x="32.7" y="545.8" font-size="11" fill="#000" font-weight="normal" textLength="81.5" lengthAdjust="spacingAndGlyphs">ID Liste de points</text>
<text x="152.6" y="545.8" font-size="11" fill="#000" font-weight="normal" textLength="5.9" lengthAdjust="spacingAndGlyphs">5</text>
<rect x="16" y="551" width="133" height="16" fill="#316AC5"/>
<rect x="150" y="551" width="100" height="16" fill="#fff"/>
<text x="32.7" y="562.8" font-size="11" fill="#fff" font-weight="normal" textLength="68.7" lengthAdjust="spacingAndGlyphs">Ordre de sortie</text>
<text x="152.6" y="562.8" font-size="11" fill="#000" font-weight="normal" textLength="21.4" lengthAdjust="spacingAndGlyphs">Auto</text>
<rect x="230.5" y="552" width="18.5" height="14.5" fill="#ECE9D8"/>
<path d="M230.5 566.5 V552.5 H248.5" fill="none" stroke="#fff" stroke-width="1"/>
<path d="M231 566 H248.5 V553" fill="none" stroke="#716F64" stroke-width="1"/>
<path d="M232 565 H247.5 V554" fill="none" stroke="#ACA899" stroke-width="1"/>
<path d="M236.5 557.8 h6 l-3 3.2 z" fill="#000"/>
<rect x="251" y="306.5" width="18" height="260.5" fill="url(#gSbTrack)"/>
<rect x="252" y="307.0" width="16" height="16.5" rx="2" fill="url(#gSbBtn)" stroke="#fff" stroke-width="1"/>
<rect x="252.5" y="307.5" width="15" height="15.5" rx="2" fill="none" stroke="#A9BDEE" stroke-width="0.8"/>
<path d="M256 317.5 L260 313.5 L264 317.5" fill="none" stroke="#4D6185" stroke-width="2.2"/>
<rect x="252" y="550.0" width="16" height="16.5" rx="2" fill="url(#gSbBtn)" stroke="#fff" stroke-width="1"/>
<rect x="252.5" y="550.5" width="15" height="15.5" rx="2" fill="none" stroke="#A9BDEE" stroke-width="0.8"/>
<path d="M256 556.5 L260 560.5 L264 556.5" fill="none" stroke="#4D6185" stroke-width="2.2"/>
<rect x="252" y="404.5" width="16" height="142" rx="2" fill="url(#gSbBtn)" stroke="#fff" stroke-width="1"/>
<rect x="252.5" y="405" width="15" height="141" rx="2" fill="none" stroke="#A9BDEE" stroke-width="0.8"/>
<rect x="257" y="470" width="7" height="1" fill="#EEF4FE"/>
<rect x="258" y="471" width="7" height="1" fill="#8CA4D8"/>
<rect x="257" y="472" width="7" height="1" fill="#EEF4FE"/>
<rect x="258" y="473" width="7" height="1" fill="#8CA4D8"/>
<rect x="257" y="474" width="7" height="1" fill="#EEF4FE"/>
<rect x="258" y="475" width="7" height="1" fill="#8CA4D8"/>
<rect x="257" y="476" width="7" height="1" fill="#EEF4FE"/>
<rect x="258" y="477" width="7" height="1" fill="#8CA4D8"/>
<rect x="269" y="79" width="1" height="490" fill="#B8B5A4"/>
<rect x="270" y="79" width="1" height="490" fill="#A9A695"/>
<rect x="271" y="79" width="1" height="490" fill="#98957F"/>
<rect x="272" y="542" width="520" height="2.5" fill="#ACA899"/>
<rect x="272" y="544.5" width="520" height="24.5" fill="#fff"/>
<rect x="2" y="569" width="790" height="18" fill="#ECE9D8"/>
<path d="M3 571.5 H428" stroke="#ACA899" stroke-width="1"/>
<path d="M430.0 587 V571.5 H627.5" fill="none" stroke="#9D9A8B" stroke-width="1"/>
<path d="M627.0 572 V587" stroke="#fff" stroke-width="1"/>
<path d="M630.0 587 V571.5 H777.5" fill="none" stroke="#9D9A8B" stroke-width="1"/>
<path d="M777.0 572 V587" stroke="#fff" stroke-width="1"/>
<text x="432.7" y="584.5" font-size="11" fill="#000" font-weight="normal" textLength="84.1" lengthAdjust="spacingAndGlyphs">Propriété modifiée</text>
<text x="689.7" y="584.8" font-size="11.5" fill="#000" font-weight="normal" textLength="86.5" lengthAdjust="spacingAndGlyphs">19.0000, -38.0000</text>
<path d="M781 587 L792 576 M785 587 L792 580 M789 587 L792 584" stroke="#ACA899" stroke-width="1.3"/>
<path d="M782 587 L792 577 M786 587 L792 581" stroke="#fff" stroke-width="0.8"/>
<rect x="272" y="79" width="520" height="463" fill="#000"/>
<g clip-path="url(#clipCanvas)" fill="none" stroke-linecap="butt">
<path d="M401 78 L271.5 315.5" stroke="#0C8A0C" stroke-width="1.1"/>
<path d="M271 351.9 L793 474.4" stroke="#D81E00" stroke-width="1.2"/>
<path d="M272.3 505 L275.6 543" stroke="#0000FF" stroke-width="1.6"/>
<path d="M560 100.5 L747 144.5 Q775 149 793 141 M722 79 L786 93.5 L793 85" stroke="#061A12" stroke-width="1" stroke-dasharray="1 1.5"/>
<path d="M793 383 Q765 430 759.5 452 Q758 475 770 490 Q780 500 793 505" stroke="#061A12" stroke-width="1" stroke-dasharray="1 1.5"/>
<path d="M524.7 144.4 L698.2 185.3" stroke="#00D2DC" stroke-width="1.15"/>
<path d="M746.4 264.4 L676.1 392.8" stroke="#00D2DC" stroke-width="1.15"/>
<path d="M562.4 433.6 L388.9 392.7" stroke="#00D2DC" stroke-width="1.15"/>
<path d="M340.7 313.6 L411.0 185.2" stroke="#00D2DC" stroke-width="1.15"/>
<path d="M411.0 185.2 C429.1 152.2 480.0 133.9 524.7 144.4" stroke="#6CDC5C" stroke-width="1.15"/>
<path d="M698.2 185.3 C742.9 195.9 764.5 231.3 746.4 264.4" stroke="#6CDC5C" stroke-width="1.15"/>
<path d="M676.1 392.8 C658.0 425.8 607.1 444.1 562.4 433.6" stroke="#6CDC5C" stroke-width="1.15"/>
<path d="M388.9 392.7 C344.2 382.1 322.6 346.7 340.7 313.6" stroke="#6CDC5C" stroke-width="1.15"/>
<path d="M527.0 166.4 L700.5 207.3" stroke="#00D2DC" stroke-width="1.15"/>
<path d="M748.7 286.4 L678.4 414.8" stroke="#00D2DC" stroke-width="1.15"/>
<path d="M564.7 455.6 L391.2 414.7" stroke="#00D2DC" stroke-width="1.15"/>
<path d="M343.0 335.6 L413.3 207.2" stroke="#00D2DC" stroke-width="1.15"/>
<path d="M413.3 207.2 C431.4 174.2 482.3 155.9 527.0 166.4" stroke="#6CDC5C" stroke-width="1.15"/>
<path d="M700.5 207.3 C745.2 217.9 766.8 253.3 748.7 286.4" stroke="#6CDC5C" stroke-width="1.15"/>
<path d="M678.4 414.8 C660.3 447.8 609.4 466.1 564.7 455.6" stroke="#6CDC5C" stroke-width="1.15"/>
<path d="M391.2 414.7 C346.5 404.1 324.9 368.7 343.0 335.6" stroke="#6CDC5C" stroke-width="1.15"/>
<path d="M471.2 170.3 L714.1 227.6 L615.7 407.3 L372.8 350.0 Z" stroke="#00D2DC" stroke-width="1.15"/>
<path d="M638.9 311.3 L633.0 320.3 L625.6 328.8 L616.8 336.6 L606.8 343.6 L595.6 349.6 L583.6 354.7 L570.9 358.5 L557.7 361.2 L544.3 362.7 L530.8 362.8 L517.6 361.8 L504.8 359.4 L492.7 355.9 L481.4 351.2 L471.2 345.4 L462.3 338.7 L454.7 331.1 L448.7 322.8 L444.2 313.9 L441.5 304.6 L440.5 295.0 L441.3 285.3 L443.8 275.7 L448.0 266.3 L453.9 257.3 L461.3 248.8 L470.1 241.0 L480.1 234.0 L491.3 228.0 L503.3 222.9 L516.0 219.1 L529.2 216.4 L542.6 214.9 L556.1 214.8 L569.3 215.8 L582.1 218.2 L594.2 221.7 L605.5 226.4 L615.7 232.2 L624.6 238.9 L632.2 246.5 L638.2 254.8 L642.7 263.7 L645.4 273.0 L646.4 282.6 L645.6 292.3 L643.1 301.9 L638.9 311.3 Z" stroke="#6CDC5C" stroke-width="1.0"/>
<path d="M482.3 207 L488.2 197.4 L500.2 200.2" stroke="#00D2DC" stroke-width="1.3"/>
<path d="M452.9 103.8 L742.0 172.0 L625.0 386.0 L335.8 317.8 Z" stroke="#F2F2F2" stroke-width="1.25"/>
<path d="M429.5 146.6 C442.4 123.0 478.8 109.9 510.7 117.4" stroke="#F2F2F2" stroke-width="1.0"/>
<path d="M684.2 158.4 C716.2 165.9 731.6 191.2 718.6 214.8" stroke="#F2F2F2" stroke-width="1.0"/>
<path d="M648.4 343.2 C635.5 366.8 599.1 379.9 567.2 372.4" stroke="#F2F2F2" stroke-width="1.0"/>
<path d="M393.7 331.4 C361.7 323.9 346.3 298.6 359.3 275.0" stroke="#F2F2F2" stroke-width="1.0"/>
<path d="M611.2 261.9 L606.8 268.8 L601.2 275.2 L594.5 281.1 L586.9 286.4 L578.5 291.0 L569.4 294.8 L559.7 297.7 L549.8 299.8 L539.6 300.9 L529.4 301.0 L519.4 300.2 L509.7 298.4 L500.5 295.7 L492.0 292.2 L484.3 287.8 L477.5 282.7 L471.7 277.0 L467.1 270.7 L463.8 263.9 L461.7 256.9 L461.0 249.6 L461.6 242.3 L463.5 235.0 L466.7 227.8 L471.1 221.0 L476.7 214.6 L483.4 208.7 L491.0 203.4 L499.4 198.8 L508.5 195.0 L518.2 192.1 L528.1 190.0 L538.3 188.9 L548.5 188.8 L558.5 189.6 L568.2 191.4 L577.4 194.1 L585.9 197.6 L593.6 202.0 L600.4 207.1 L606.2 212.8 L610.8 219.1 L614.1 225.9 L616.2 232.9 L616.9 240.2 L616.3 247.5 L614.4 254.8 L611.2 261.9 Z" stroke="#F2F2F2" stroke-width="1.15"/>
<path d="M406.3 280.2 L579.0 319.5 L663.1 194.6 L495.4 144.3 L501.8 200.5" stroke="#E02808" stroke-width="1.3" stroke-dasharray="1.2 1.6"/>
<path d="M406.3 280.2 L409.7 335.0" stroke="#E02808" stroke-width="1.3" stroke-dasharray="1.2 1.6"/>
<path d="M579.0 319.5 L584.5 374.0" stroke="#D83008" stroke-width="1.5"/>
<path d="M663.1 194.6 L669.3 251.5" stroke="#D83008" stroke-width="1.5"/>
<path d="M506.6 124.1 L514.3 181.0" stroke="#E02808" stroke-width="1.3" stroke-dasharray="1.2 1.6"/>
<path d="M506.6 124.1 L522.4 217.0" stroke="#E02808" stroke-width="1.3" stroke-dasharray="1.2 1.6"/>
<path d="M558.7 193.8 L503.1 202.4 L482.0 240.9 L516.6 270.8 L572.2 262.2 L593.3 223.7" stroke="#E02808" stroke-width="1.3" stroke-dasharray="1.2 1.6"/>
<path d="M503.1 202.4 L506.8 236.8" stroke="#E02808" stroke-width="1.3" stroke-dasharray="1.2 1.6"/>
<path d="M513.6 217.2 L512.3 218.9 L510.5 220.3 L508.3 221.3 L505.8 222.0 L503.2 222.1 L500.7 221.8 L498.4 221.0 L496.6 219.8 L495.3 218.3 L494.6 216.5 L494.6 214.7 L495.2 212.8 L496.5 211.2 L498.3 209.7 L500.5 208.7 L503.0 208.0 L505.6 207.9 L508.1 208.2 L510.4 209.0 L512.2 210.2 L513.5 211.7 L514.2 213.5 L514.2 215.3 L513.6 217.2 Z" stroke="#70E070" stroke-width="1.6"/>
<path d="M516.0 239.0 L514.7 240.7 L512.9 242.1 L510.7 243.1 L508.2 243.8 L505.6 243.9 L503.1 243.6 L500.8 242.8 L499.0 241.6 L497.7 240.1 L497.0 238.3 L497.0 236.5 L497.6 234.6 L498.9 233.0 L500.7 231.5 L502.9 230.5 L505.4 229.8 L508.0 229.7 L510.5 230.0 L512.8 230.8 L514.6 232.0 L515.9 233.5 L516.6 235.3 L516.6 237.1 L516.0 239.0 Z" stroke="#5CCC64" stroke-width="1.4"/>
<path d="M516.8 239.2 L515.4 241.0 L513.5 242.6 L511.0 243.7 L508.3 244.4 L505.5 244.6 L502.8 244.2 L500.3 243.4 L498.3 242.0 L496.9 240.4 L496.1 238.5 L496.1 236.4 L496.8 234.4 L498.2 232.6 L500.2 231.1 L502.6 229.9 L505.3 229.2 L508.1 229.0 L510.9 229.4 L513.3 230.3 L515.3 231.6 L516.8 233.2 L517.5 235.1 L517.5 237.2 L516.8 239.2 Z" stroke="#8CF08C" stroke-width="1.1" stroke-dasharray="1 1.6"/>
<rect x="500.9" y="212.4" width="6" height="6" fill="#fff" stroke="none"/>
<rect x="503.4" y="213.7" width="1.6" height="1" fill="#E87858" stroke="none"/>
<rect x="503.4" y="215.5" width="1.6" height="1" fill="#E87858" stroke="none"/>
<rect x="503.4" y="217.1" width="1.6" height="1" fill="#E87858" stroke="none"/>
<path d="M507.3 215.5 L505.9 219.8" stroke="#00DCE8" stroke-width="1.7"/>
<path d="M505.4 221.3 L501.7 225.9 L504.9 229.1 L507.7 231.5 Q509.8 234.3 509.6 237.1 A3.5 2.6 0 1 1 502.6 237.1 A3.5 2.6 0 0 1 506.8 235.0" stroke="#00DCE8" stroke-width="1.35" stroke-linejoin="round"/>
<path d="M558.7 193.8 L562.4 228.2" stroke="#E02808" stroke-width="1.3" stroke-dasharray="1.2 1.6"/>
<path d="M569.2 208.5 L567.9 210.2 L566.1 211.7 L563.9 212.7 L561.4 213.3 L558.8 213.5 L556.3 213.2 L554.1 212.4 L552.2 211.2 L550.9 209.7 L550.2 207.9 L550.2 206.0 L550.8 204.2 L552.1 202.5 L553.9 201.1 L556.2 200.0 L558.6 199.4 L561.2 199.3 L563.7 199.6 L566.0 200.4 L567.8 201.6 L569.1 203.1 L569.8 204.9 L569.8 206.7 L569.2 208.5 Z" stroke="#70E070" stroke-width="1.6"/>
<path d="M571.6 230.3 L570.3 232.0 L568.5 233.5 L566.3 234.5 L563.8 235.1 L561.2 235.3 L558.7 235.0 L556.5 234.2 L554.6 233.0 L553.3 231.5 L552.6 229.7 L552.6 227.8 L553.2 226.0 L554.5 224.3 L556.3 222.9 L558.6 221.8 L561.0 221.2 L563.6 221.1 L566.1 221.4 L568.4 222.2 L570.2 223.4 L571.5 224.9 L572.2 226.7 L572.2 228.5 L571.6 230.3 Z" stroke="#5CCC64" stroke-width="1.4"/>
<path d="M572.4 230.5 L571.0 232.4 L569.1 233.9 L566.6 235.1 L563.9 235.8 L561.1 235.9 L558.4 235.6 L555.9 234.7 L553.9 233.4 L552.5 231.7 L551.7 229.8 L551.7 227.8 L552.4 225.8 L553.8 224.0 L555.8 222.4 L558.2 221.3 L560.9 220.6 L563.7 220.4 L566.5 220.8 L568.9 221.6 L570.9 222.9 L572.4 224.6 L573.1 226.5 L573.1 228.5 L572.4 230.5 Z" stroke="#8CF08C" stroke-width="1.1" stroke-dasharray="1 1.6"/>
<rect x="556.5" y="203.8" width="6" height="6" fill="#fff" stroke="none"/>
<rect x="559.0" y="205.1" width="1.6" height="1" fill="#E87858" stroke="none"/>
<rect x="559.0" y="206.9" width="1.6" height="1" fill="#E87858" stroke="none"/>
<rect x="559.0" y="208.5" width="1.6" height="1" fill="#E87858" stroke="none"/>
<path d="M562.9 206.9 L561.5 211.2" stroke="#00DCE8" stroke-width="1.7"/>
<path d="M561.0 212.7 L557.3 217.3 L560.5 220.5 L563.3 222.9 Q565.4 225.7 565.2 228.5 A3.5 2.6 0 1 1 558.2 228.5 A3.5 2.6 0 0 1 562.4 226.4" stroke="#00DCE8" stroke-width="1.35" stroke-linejoin="round"/>
<path d="M593.3 223.7 L597.0 258.1" stroke="#E02808" stroke-width="1.3" stroke-dasharray="1.2 1.6"/>
<path d="M603.7 238.4 L602.5 240.1 L600.7 241.5 L598.4 242.6 L595.9 243.2 L593.3 243.4 L590.8 243.1 L588.6 242.3 L586.7 241.1 L585.4 239.5 L584.7 237.8 L584.7 235.9 L585.4 234.1 L586.7 232.4 L588.5 231.0 L590.7 229.9 L593.2 229.3 L595.8 229.1 L598.3 229.5 L600.5 230.3 L602.4 231.5 L603.7 233.0 L604.4 234.7 L604.4 236.6 L603.7 238.4 Z" stroke="#70E070" stroke-width="1.6"/>
<path d="M606.1 260.2 L604.9 261.9 L603.1 263.3 L600.8 264.4 L598.3 265.0 L595.7 265.2 L593.2 264.9 L591.0 264.1 L589.1 262.9 L587.8 261.3 L587.1 259.6 L587.1 257.7 L587.8 255.9 L589.1 254.2 L590.9 252.8 L593.1 251.7 L595.6 251.1 L598.2 250.9 L600.7 251.3 L602.9 252.1 L604.8 253.3 L606.1 254.8 L606.8 256.5 L606.8 258.4 L606.1 260.2 Z" stroke="#5CCC64" stroke-width="1.4"/>
<path d="M607.0 260.4 L605.6 262.3 L603.6 263.8 L601.2 265.0 L598.5 265.7 L595.6 265.8 L592.9 265.5 L590.5 264.6 L588.4 263.3 L587.0 261.6 L586.3 259.7 L586.2 257.7 L587.0 255.7 L588.3 253.9 L590.3 252.3 L592.7 251.2 L595.5 250.5 L598.3 250.3 L601.0 250.7 L603.5 251.5 L605.5 252.8 L606.9 254.5 L607.7 256.4 L607.7 258.4 L607.0 260.4 Z" stroke="#8CF08C" stroke-width="1.1" stroke-dasharray="1 1.6"/>
<rect x="591.1" y="233.7" width="6" height="6" fill="#fff" stroke="none"/>
<rect x="593.6" y="235.0" width="1.6" height="1" fill="#E87858" stroke="none"/>
<rect x="593.6" y="236.8" width="1.6" height="1" fill="#E87858" stroke="none"/>
<rect x="593.6" y="238.4" width="1.6" height="1" fill="#E87858" stroke="none"/>
<path d="M597.5 236.8 L596.1 241.1" stroke="#00DCE8" stroke-width="1.7"/>
<path d="M595.6 242.6 L591.9 247.2 L595.1 250.4 L597.9 252.8 Q600.0 255.6 599.8 258.4 A3.5 2.6 0 1 1 592.8 258.4 A3.5 2.6 0 0 1 597.0 256.3" stroke="#00DCE8" stroke-width="1.35" stroke-linejoin="round"/>
<path d="M572.2 262.2 L575.9 296.6" stroke="#E02808" stroke-width="1.3" stroke-dasharray="1.2 1.6"/>
<path d="M582.7 277.0 L581.4 278.6 L579.6 280.1 L577.4 281.1 L574.9 281.8 L572.3 281.9 L569.8 281.6 L567.5 280.8 L565.7 279.6 L564.4 278.1 L563.7 276.3 L563.7 274.5 L564.3 272.6 L565.6 270.9 L567.4 269.5 L569.6 268.5 L572.1 267.8 L574.7 267.7 L577.2 268.0 L579.5 268.8 L581.3 270.0 L582.6 271.5 L583.3 273.3 L583.3 275.1 L582.7 277.0 Z" stroke="#70E070" stroke-width="1.6"/>
<path d="M585.1 298.8 L583.8 300.4 L582.0 301.9 L579.8 302.9 L577.3 303.6 L574.7 303.7 L572.2 303.4 L569.9 302.6 L568.1 301.4 L566.8 299.9 L566.1 298.1 L566.1 296.3 L566.7 294.4 L568.0 292.7 L569.8 291.3 L572.0 290.3 L574.5 289.6 L577.1 289.5 L579.6 289.8 L581.9 290.6 L583.7 291.8 L585.0 293.3 L585.7 295.1 L585.7 296.9 L585.1 298.8 Z" stroke="#5CCC64" stroke-width="1.4"/>
<path d="M585.9 299.0 L584.5 300.8 L582.5 302.3 L580.1 303.5 L577.4 304.2 L574.6 304.4 L571.8 304.0 L569.4 303.1 L567.4 301.8 L565.9 300.2 L565.2 298.3 L565.2 296.2 L565.9 294.2 L567.3 292.4 L569.2 290.8 L571.7 289.7 L574.4 289.0 L577.2 288.8 L579.9 289.2 L582.4 290.0 L584.4 291.4 L585.8 293.0 L586.6 294.9 L586.6 297.0 L585.9 299.0 Z" stroke="#8CF08C" stroke-width="1.1" stroke-dasharray="1 1.6"/>
<rect x="570.0" y="272.2" width="6" height="6" fill="#fff" stroke="none"/>
<rect x="572.5" y="273.5" width="1.6" height="1" fill="#E87858" stroke="none"/>
<rect x="572.5" y="275.3" width="1.6" height="1" fill="#E87858" stroke="none"/>
<rect x="572.5" y="276.9" width="1.6" height="1" fill="#E87858" stroke="none"/>
<path d="M576.4 275.3 L575.0 279.6" stroke="#00DCE8" stroke-width="1.7"/>
<path d="M574.5 281.1 L570.8 285.7 L574.0 288.9 L576.8 291.3 Q578.9 294.1 578.7 296.9 A3.5 2.6 0 1 1 571.7 296.9 A3.5 2.6 0 0 1 575.9 294.8" stroke="#00DCE8" stroke-width="1.35" stroke-linejoin="round"/>
<path d="M516.6 270.8 L520.3 305.2" stroke="#E02808" stroke-width="1.3" stroke-dasharray="1.2 1.6"/>
<path d="M527.1 285.6 L525.8 287.3 L524.0 288.7 L521.7 289.8 L519.3 290.4 L516.7 290.5 L514.2 290.2 L511.9 289.4 L510.1 288.2 L508.8 286.7 L508.1 284.9 L508.1 283.1 L508.7 281.3 L510.0 279.6 L511.8 278.1 L514.0 277.1 L516.5 276.5 L519.1 276.3 L521.6 276.6 L523.8 277.4 L525.7 278.6 L527.0 280.1 L527.7 281.9 L527.7 283.8 L527.1 285.6 Z" stroke="#70E070" stroke-width="1.6"/>
<path d="M529.5 307.4 L528.2 309.1 L526.4 310.5 L524.1 311.6 L521.7 312.2 L519.1 312.3 L516.6 312.0 L514.3 311.2 L512.5 310.0 L511.2 308.5 L510.5 306.7 L510.5 304.9 L511.1 303.1 L512.4 301.4 L514.2 299.9 L516.4 298.9 L518.9 298.3 L521.5 298.1 L524.0 298.4 L526.2 299.2 L528.1 300.4 L529.4 301.9 L530.1 303.7 L530.1 305.6 L529.5 307.4 Z" stroke="#5CCC64" stroke-width="1.4"/>
<path d="M530.3 307.6 L528.9 309.4 L526.9 311.0 L524.5 312.1 L521.8 312.8 L519.0 313.0 L516.2 312.6 L513.8 311.8 L511.8 310.5 L510.3 308.8 L509.6 306.9 L509.6 304.9 L510.3 302.9 L511.7 301.0 L513.6 299.5 L516.1 298.3 L518.8 297.6 L521.6 297.5 L524.3 297.8 L526.8 298.7 L528.8 300.0 L530.2 301.7 L531.0 303.6 L531.0 305.6 L530.3 307.6 Z" stroke="#8CF08C" stroke-width="1.1" stroke-dasharray="1 1.6"/>
<rect x="514.4" y="280.8" width="6" height="6" fill="#fff" stroke="none"/>
<rect x="516.9" y="282.1" width="1.6" height="1" fill="#E87858" stroke="none"/>
<rect x="516.9" y="283.9" width="1.6" height="1" fill="#E87858" stroke="none"/>
<rect x="516.9" y="285.5" width="1.6" height="1" fill="#E87858" stroke="none"/>
<path d="M520.8 283.9 L519.4 288.2" stroke="#00DCE8" stroke-width="1.7"/>
<path d="M518.9 289.7 L515.2 294.3 L518.4 297.5 L521.2 299.9 Q523.3 302.7 523.1 305.5 A3.5 2.6 0 1 1 516.1 305.5 A3.5 2.6 0 0 1 520.3 303.4" stroke="#00DCE8" stroke-width="1.35" stroke-linejoin="round"/>
<path d="M482.0 240.9 L485.7 275.3" stroke="#E02808" stroke-width="1.3" stroke-dasharray="1.2 1.6"/>
<path d="M492.5 255.7 L491.2 257.4 L489.4 258.8 L487.2 259.9 L484.7 260.5 L482.1 260.7 L479.6 260.3 L477.4 259.5 L475.5 258.3 L474.2 256.8 L473.5 255.1 L473.5 253.2 L474.2 251.4 L475.4 249.7 L477.2 248.3 L479.5 247.2 L482.0 246.6 L484.6 246.4 L487.1 246.7 L489.3 247.5 L491.2 248.7 L492.5 250.3 L493.2 252.0 L493.2 253.9 L492.5 255.7 Z" stroke="#70E070" stroke-width="1.6"/>
<path d="M494.9 277.5 L493.6 279.2 L491.8 280.6 L489.6 281.7 L487.1 282.3 L484.5 282.5 L482.0 282.1 L479.8 281.3 L477.9 280.1 L476.6 278.6 L475.9 276.9 L475.9 275.0 L476.6 273.2 L477.8 271.5 L479.6 270.1 L481.9 269.0 L484.4 268.4 L487.0 268.2 L489.5 268.5 L491.7 269.3 L493.6 270.5 L494.9 272.1 L495.6 273.8 L495.6 275.7 L494.9 277.5 Z" stroke="#5CCC64" stroke-width="1.4"/>
<path d="M495.7 277.7 L494.4 279.5 L492.4 281.1 L490.0 282.2 L487.2 282.9 L484.4 283.1 L481.7 282.7 L479.2 281.9 L477.2 280.6 L475.8 278.9 L475.0 277.0 L475.0 275.0 L475.7 273.0 L477.1 271.1 L479.1 269.6 L481.5 268.4 L484.2 267.7 L487.1 267.6 L489.8 267.9 L492.2 268.8 L494.3 270.1 L495.7 271.8 L496.4 273.7 L496.5 275.7 L495.7 277.7 Z" stroke="#8CF08C" stroke-width="1.1" stroke-dasharray="1 1.6"/>
<rect x="479.8" y="250.9" width="6" height="6" fill="#fff" stroke="none"/>
<rect x="482.3" y="252.2" width="1.6" height="1" fill="#E87858" stroke="none"/>
<rect x="482.3" y="254.0" width="1.6" height="1" fill="#E87858" stroke="none"/>
<rect x="482.3" y="255.6" width="1.6" height="1" fill="#E87858" stroke="none"/>
<path d="M486.2 254.0 L484.8 258.3" stroke="#00DCE8" stroke-width="1.7"/>
<path d="M484.3 259.8 L480.6 264.4 L483.8 267.6 L486.6 270.0 Q488.7 272.8 488.5 275.6 A3.5 2.6 0 1 1 481.5 275.6 A3.5 2.6 0 0 1 485.7 273.5" stroke="#00DCE8" stroke-width="1.35" stroke-linejoin="round"/>
<path d="M538.5 239.6 L543.9 248.5 H533.2 Z" stroke="#F01E08" stroke-width="1.6"/>
<path d="M395.2 390.8 L391.2 393.8 L393.2 397.8" stroke="#E8C800" stroke-width="1.2"/>
<path d="M397.7 413.2 L393.7 416.2 L395.7 420.2" stroke="#E8C800" stroke-width="1.2"/>
<path d="M663.5 254.6 L669.5 252.2 L673.1 257.6" stroke="#E8C800" stroke-width="1.2"/>
<path d="M579.2 379.5 L583.8 378.3 L582.3 372.3" stroke="#E8C800" stroke-width="1.2"/>
<path d="M405.7 331.0 L409.7 335.0 L403.7 337.0" stroke="#E8C800" stroke-width="1.2"/>
<path d="M518.5 177.9 L513.5 180.3 L516.0 185.6" stroke="#E8C800" stroke-width="1.2"/>
<path d="M517.4 215.4 L524.2 217.6 L520.2 221.9" stroke="#E8C800" stroke-width="1.2"/>
<path d="M507.5 198.6 L502.0 201.2 L505.1 206.0" stroke="#E8C800" stroke-width="1.2"/>
<path d="M661.1 238.4 L675.1 241.5 L669.6 251.8" stroke="#00D2DC" stroke-width="1.1"/>
<path d="M661.1 238.4 L669.4 251.6" stroke="#6CDC5C" stroke-width="1.1"/>
<path d="M604.4 370.3 L599.5 379.5" stroke="#00D2DC" stroke-width="1.1"/>
<path d="M597.5 372.8 L604.4 370.3" stroke="#6CDC5C" stroke-width="1.3"/>
<path d="M587 376.8 L590 376" stroke="#6CDC5C" stroke-width="1.3"/>
<path d="M411 335.5 L417.5 326.5 L424.5 338.5" stroke="#6CDC5C" stroke-width="1.1"/>
</g>
</svg>
</body></html>
